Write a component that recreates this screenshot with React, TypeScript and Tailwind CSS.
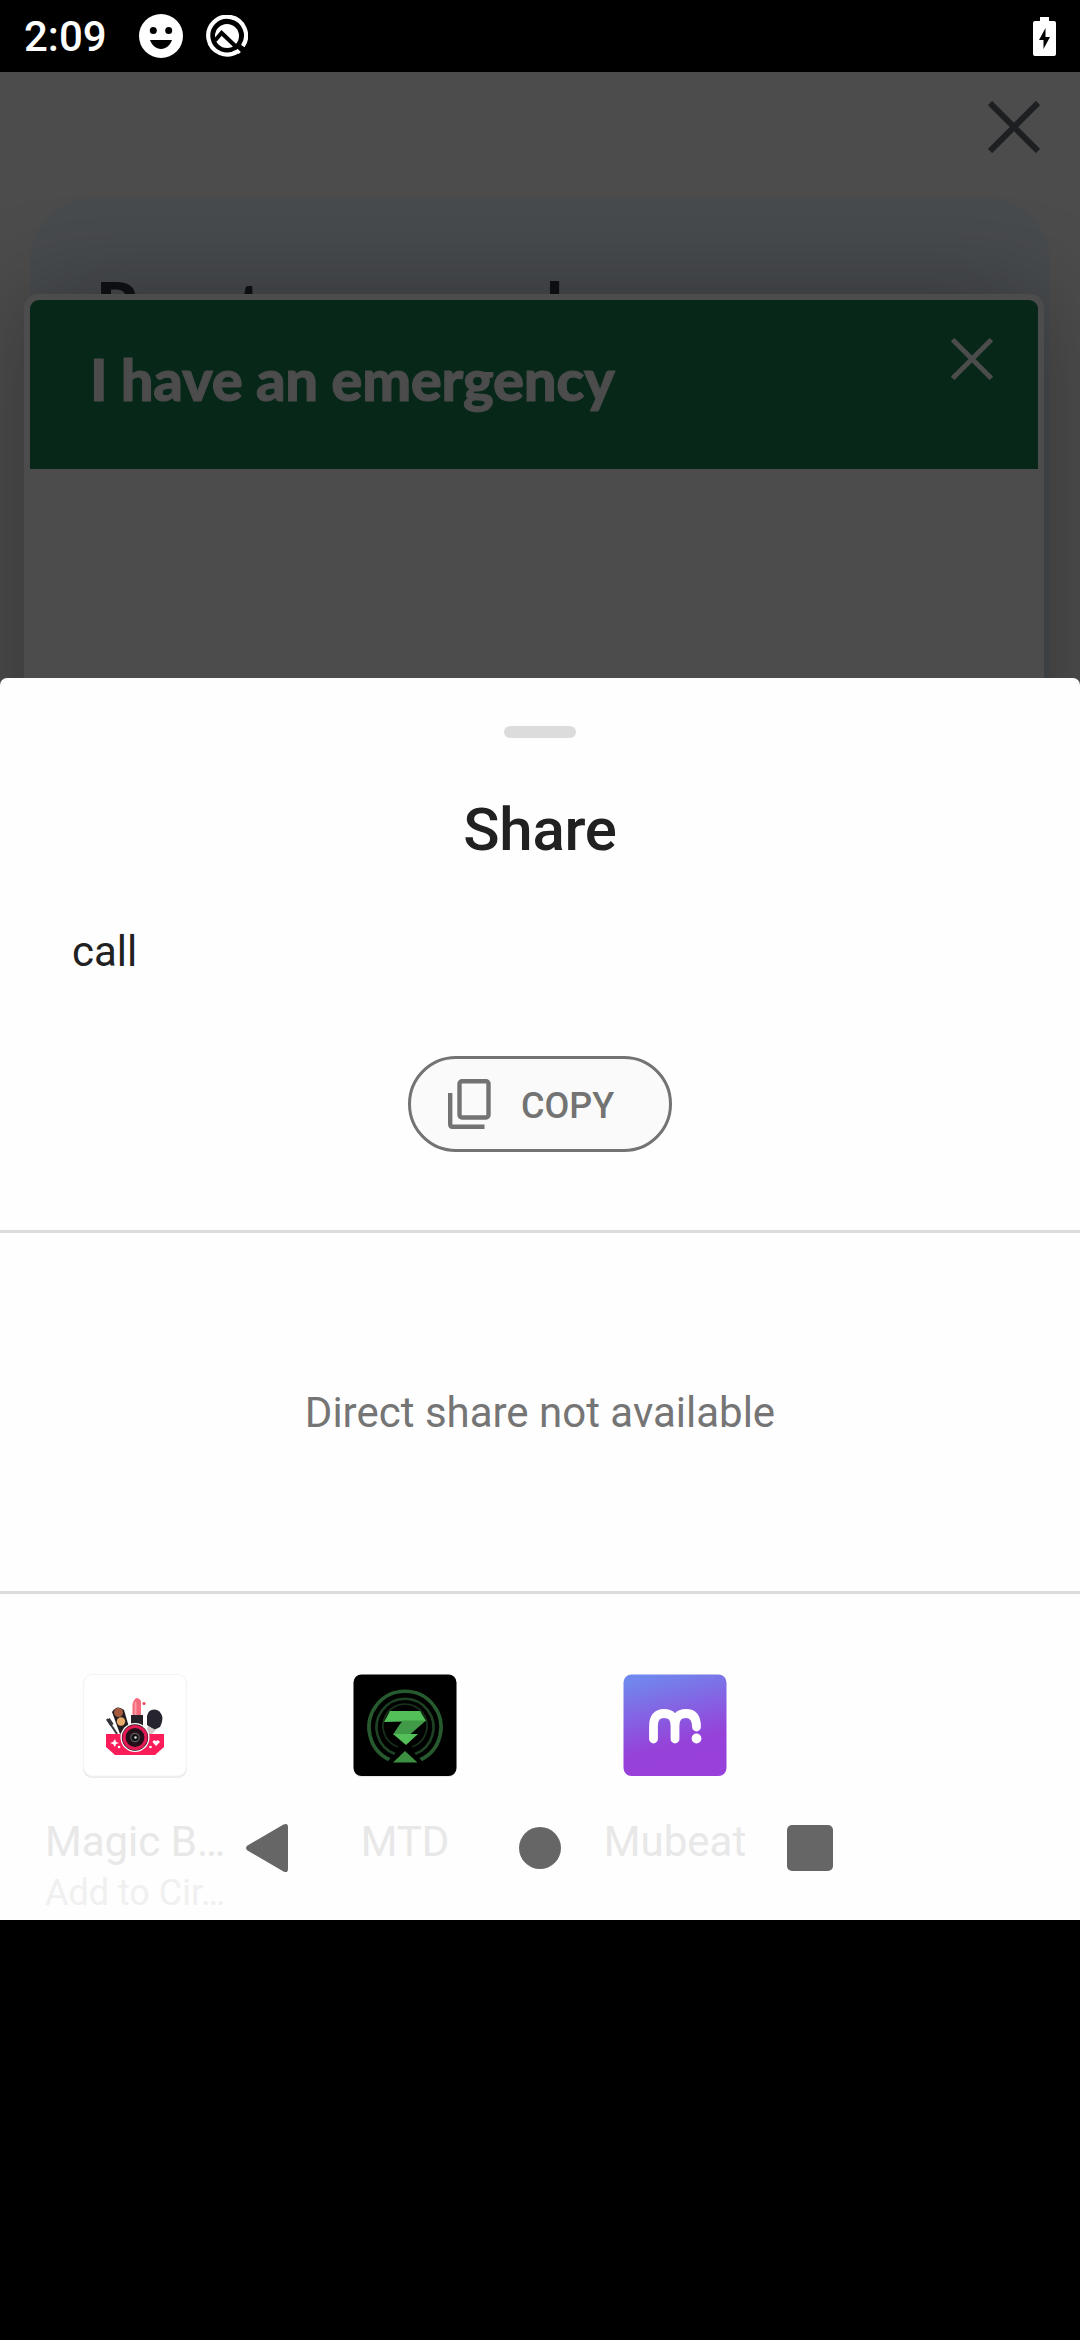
import React from "react";

function CloseIcon({ className, strokeWidth }: { className: string; strokeWidth: number }) {
  return (
    <svg className={className} viewBox="0 0 52 52" fill="none" stroke="currentColor" strokeWidth={strokeWidth}>
      <path d="M2 2L50 50M50 2L2 50" />
    </svg>
  );
}

function StatusBar() {
  return (
    <header className="flex h-[72px] items-center bg-black pl-6 pr-6 text-white">
      <span className="w-[115px] pt-0.5 text-[42px] font-medium leading-none">2:09</span>
      <svg className="h-11 w-11" viewBox="0 0 44 44">
        <circle cx="22" cy="22" r="22" fill="#fff" />
        <circle cx="14.3" cy="16.5" r="3.5" />
        <circle cx="29.7" cy="16.5" r="3.5" />
        <path d="M11 26H33C31 31.5 27 35 22 35S13 31.5 11 26Z" />
      </svg>
      <svg className="ml-[23px] h-[42px] w-[42px]" viewBox="0 0 42 42" fill="none">
        <path d="M31.7 36.3A18.9 18.9 0 1 1 36.8 31.2" stroke="#fff" strokeWidth="4.2" />
        <circle cx="21" cy="21" r="12" fill="#fff" />
        <path d="M9 25.5L15.6 18L34.5 36" stroke="#000" strokeWidth="4" />
        <path d="M30.500 34.800L33.800 38" stroke="#fff" strokeWidth="3" />
      </svg>
      <svg className="ml-auto h-[39px] w-[23px]" viewBox="0 0 23 39">
        <path d="M7 0H16V4H21Q23 4 23 6V37Q23 39 21 39H2Q0 39 0 37V6Q0 4 2 4H7Z" fill="#fff" />
        <path d="M12.5 11V20H17L10.5 32V23H6Z" />
      </svg>
    </header>
  );
}

function DimmedPage() {
  return (
    <section className="relative h-[606px] overflow-hidden bg-[#4c4c4c]">
      <div className="flex h-[126px] items-start justify-end pr-10 pt-[29px]">
        <CloseIcon className="h-[52px] w-[52px] text-[#1e1f22]" strokeWidth={6} />
      </div>
      <div className="mx-[30px] h-[600px] rounded-[64px] bg-[#484b4e] pl-[66px] pt-[67px]">
        <h1 className="font-['Lato'] text-[66.5px] font-black leading-[80px] text-[#0f1115]">Reset password</h1>
      </div>
      <div className="absolute left-6 top-[222px] h-[600px] w-[1020px] rounded-[14px] bg-[#4c4c4c] p-1.5 shadow-[0_0_96px_rgba(0,0,0,0.31)]">
        <div className="flex h-[169px] justify-between rounded-t-[9px] bg-[#072719] pl-[60px] pr-[45px] text-[#4c4c4c]">
          <h2 className="pt-[44px] font-['Lato'] text-[58px] font-black leading-[70px] tracking-[-0.3px] [-webkit-text-stroke:1px_#4c4c4c]">
            I have an emergency
          </h2>
          <CloseIcon className="mt-[38px] h-[42px] w-[42px]" strokeWidth={6} />
        </div>
      </div>
    </section>
  );
}

function CopyIcon() {
  return (
    <svg className="h-[50px] w-[43px]" viewBox="0 0 43 50" fill="none" stroke="#737373" strokeWidth="4.4">
      <rect x="11.5" y="2.2" width="29" height="36.3" rx="2.5" />
      <path d="M2.2 14V45.3Q2.2 47.8 4.7 47.8H36.5" />
    </svg>
  );
}

const tile = "h-[104px] w-[104px]";

function MagicIcon() {
  return (
    <svg className={tile} viewBox="0 0 104 104">
      <rect x="0" y="1" width="104" height="103" rx="9" fill="#ececec" />
      <rect x="0.7" y="0.5" width="102.6" height="101.5" rx="9" fill="#fff" stroke="#f4f4f4" />
      <path d="M24 45L34 60" stroke="#34343c" strokeWidth="2" />
      <path d="M25 45L29 51" stroke="#34343c" strokeWidth="4" />
      <path d="M29 38Q34 30 41 36L46 53L37 60Z" fill="#231d22" />
      <circle cx="35.5" cy="38.500" r="4.5" fill="#a35a3d" />
      <circle cx="38" cy="47.500" r="4.2" fill="#e8aa69" />
      <path d="M49.500 42V30Q53 20 58 27V42Z" fill="#f56b7c" />
      <path d="M52.500 28V42" stroke="#f99aa3" strokeWidth="2" />
      <path d="M48 41H60V55H48Z" fill="#262127" />
      <circle cx="61" cy="29.500" r="1.6" fill="#e8475d" />
      <path d="M64 51V42Q66 34 74 36Q83 41 77 53L71 56Z" fill="#26252f" />
      <path d="M65 52L73 56L68 61L62 59Z" fill="#cfc9c8" />
      <path d="M23 60H81V73L72 81H32L23 73Z" fill="#fa1d59" />
      <circle cx="52" cy="63.500" r="14.5" fill="#fff" />
      <circle cx="52" cy="63.500" r="13.2" fill="#241019" />
      <circle cx="52" cy="63.500" r="11" fill="none" stroke="#e21b55" strokeWidth="3.2" />
      <circle cx="52" cy="63.500" r="4.2" fill="#111" stroke="#5b5b5f" strokeWidth="1.2" />
      <circle cx="52.500" cy="63.500" r="1.3" fill="#ddd" />
      <path d="M32 65L33 68L36 69L33 70L32 73L30 70L27 69L30 68Z" fill="#fff" />
      <circle cx="36" cy="73" r="1.3" fill="#fff" />
      <circle cx="67.5" cy="73" r="1.3" fill="#fff" />
      <path d="M73 72L69.5 68Q71 65 73 67.5Q75 65 77 68Z" fill="#fff" />
    </svg>
  );
}

function MtdIcon() {
  return (
    <svg className={tile} viewBox="0 0 104 104" fill="none">
      <rect x="0.5" y="2" width="103" height="101" rx="8" fill="#e9e9e9" />
      <rect x="0.5" y="0.5" width="103" height="101.5" rx="8" fill="#000" />
      <path d="M37 86A36 36 0 1 1 67 86" stroke="#275a2e" strokeWidth="3.6" />
      <path d="M42 80A28.5 28.5 0 1 1 62 80" stroke="#1e4224" strokeWidth="2.6" />
      <path d="M45 73A22 22 0 1 1 59 73" stroke="#18301b" strokeWidth="1.8" />
      <path d="M28 94L52 70L76 94Z" fill="#000" />
      <path d="M37 37H67L73 47L31 48Z" fill="#53bf58" />
      <path d="M50 46.500L73 46.500L57 60.500H40L47 50Z" fill="#419a47" />
      <path d="M40 60H65L53 71Z" fill="#53bf58" />
      <path d="M52 77L64.5 88.500H40Z" fill="#3b9141" />
    </svg>
  );
}

function MubeatIcon() {
  return (
    <svg className={tile} viewBox="0 0 104 104" fill="none">
      <defs>
        <linearGradient id="mubeat" x1="0.25" y1="0" x2="0.5" y2="1">
          <stop offset="0" stopColor="#7088ee" />
          <stop offset="0.7" stopColor="#9642d9" />
          <stop offset="1" stopColor="#9840da" />
        </linearGradient>
      </defs>
      <rect x="0.5" y="0.5" width="103" height="101.5" rx="8" fill="url(#mubeat)" />
      <path
        d="M30.5 65V52Q30.500 39.500 41 39.500Q52 39.500 52 52V65M52 52Q52 39.500 63 39.500Q73.500 39.500 73.500 53"
        stroke="#fff"
        strokeWidth="8.8"
        strokeLinecap="round"
      />
      <circle cx="73.5" cy="64.5" r="4.9" fill="#fff" />
    </svg>
  );
}

function AppTarget({ icon, name, detail }: { icon: React.ReactNode; name: string; detail?: string }) {
  return (
    <div className="flex w-[270px] flex-col items-center">
      {icon}
      <span className="mt-[39px] whitespace-nowrap text-[42px] leading-[49px] text-[#e8e8e8]">{name}</span>
      {detail && <span className="mt-1.5 whitespace-nowrap text-[36px] leading-[42px] text-[#f0f0f0]">{detail}</span>}
    </div>
  );
}

function NavigationBar() {
  return (
    <nav className="absolute inset-x-0 bottom-0 flex h-36 items-center pl-[246px]">
      <svg className="h-[50px] w-[42px]" viewBox="0 0 42 50">
        <path d="M37.5 1.5Q42 -0.5 42 4V46Q42 50.5 37.5 48.5L1.5 27.5Q-1.5 25 1.5 22.5Z" fill="#666" />
      </svg>
      <div className="ml-[231px] h-[42px] w-[42px] rounded-full bg-[#666]" />
      <div className="ml-[226px] h-[46px] w-[46px] rounded-[5px] bg-[#666]" />
    </nav>
  );
}

function ShareSheet() {
  return (
    <main className="relative h-[1242px] bg-[#444]">
      <div className="flex h-full flex-col overflow-hidden rounded-t-[7px] bg-[#fefefe]">
        <div className="mx-auto mt-12 h-3 w-[72px] shrink-0 rounded-full bg-[#dcdcdc]" />
        <h2 className="mt-[57px] text-center text-[60px] font-medium leading-[70px] tracking-[-0.3px] text-[#212121]">Share</h2>
        <p className="mt-[62px] pl-[72px] text-[42px] leading-[49px] text-[#212121]">call</p>
        <button className="mx-auto mt-[80px] flex h-24 w-[264px] shrink-0 items-center rounded-full border-[3px] border-[#737373] bg-[#fafafa] pl-[37px] text-[#737373]">
          <CopyIcon />
          <span className="ml-[30px] pt-[3px] text-[36px] font-medium leading-none">COPY</span>
        </button>
        <div className="mt-[78px] flex h-[364px] shrink-0 items-center justify-center border-y-[3px] border-[#dcdcdc] text-[42px] text-[#757575]">
          Direct share not available
        </div>
        <div className="flex pt-20">
          <AppTarget icon={<MagicIcon />} name="Magic B…" detail="Add to Cir…" />
          <AppTarget icon={<MtdIcon />} name="MTD" />
          <AppTarget icon={<MubeatIcon />} name="Mubeat" />
        </div>
      </div>
      <NavigationBar />
    </main>
  );
}

export default function App() {
  return (
    <div className="h-[2340px] w-[1080px] overflow-hidden bg-black font-['Roboto',sans-serif]">
      <StatusBar />
      <DimmedPage />
      <ShareSheet />
    </div>
  );
}
